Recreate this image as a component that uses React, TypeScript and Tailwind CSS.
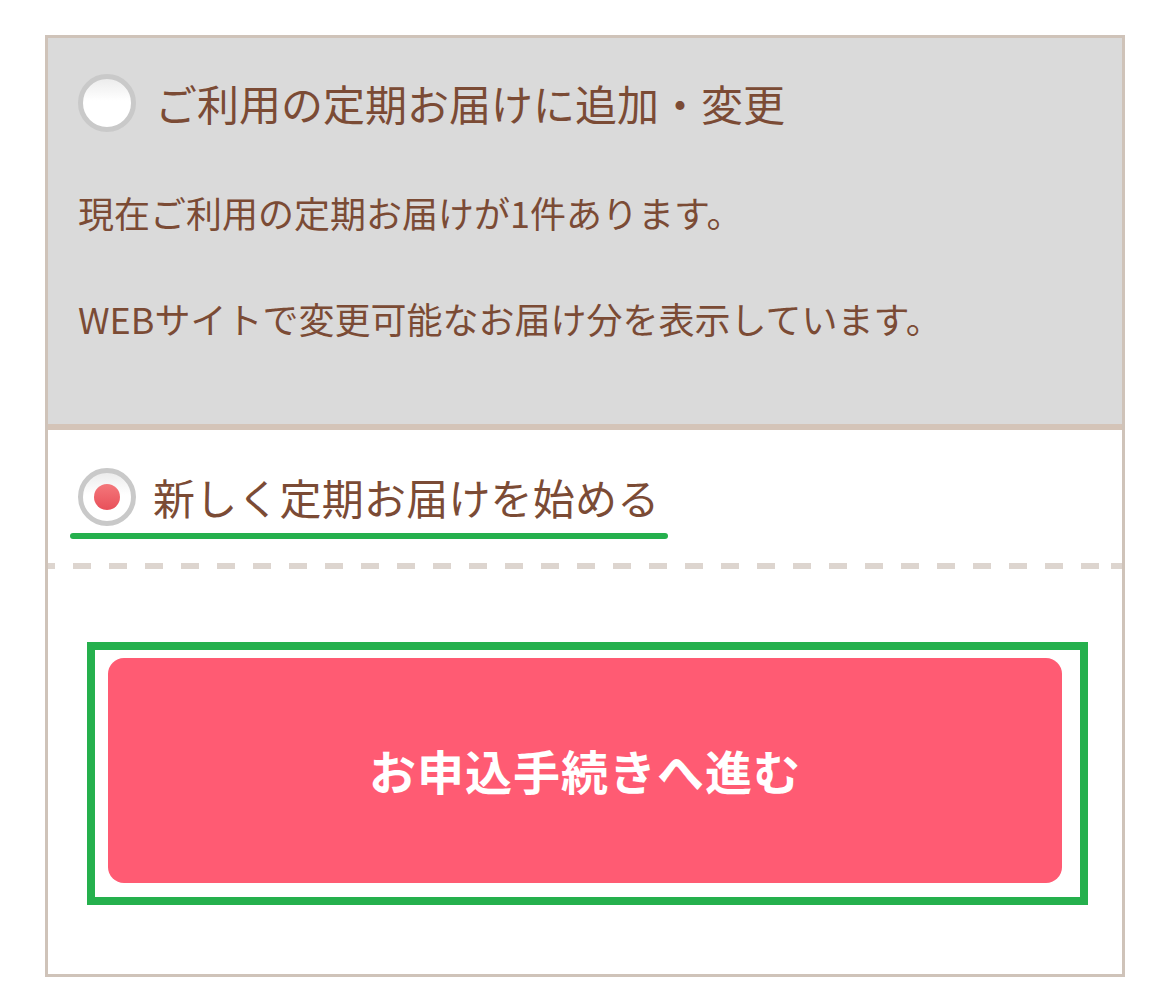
const FONT = "font-['Noto_Sans_CJK_JP','Noto_Sans',sans-serif]"

function Radio({ checked }: { checked: boolean }) {
  return (
    <span className="flex h-[58px] w-[58px] shrink-0 items-center justify-center rounded-full border-[5px] border-[#c9c9c9] bg-[linear-gradient(180deg,#ececec_0%,#ffffff_45%,#ffffff_100%)]">
      {checked && (
        <span className="h-[26px] w-[26px] rounded-full bg-[linear-gradient(180deg,#f4777b_0%,#e8505a_100%)]" />
      )}
    </span>
  )
}

export default function App() {
  return (
    <div className={`min-h-[1004px] bg-white pl-[45px] pt-[35px] text-[#7b4b35] ${FONT}`}>
      <div className="w-[1080px] border-[3px] border-[#cfc3b9]">
        {/* existing subscription */}
        <div className="flex flex-col border-b-[6px] border-[#d4c4b8] bg-[#dadada] pb-[79px] pl-[30px] pt-[36px]">
          <label className="flex items-center gap-[19px]">
            <Radio checked={false} />
            <span className="text-[42px] leading-[54px]">ご利用の定期お届けに追加・変更</span>
          </label>
          <p className="mt-[54px] text-[36px] leading-[53px]">現在ご利用の定期お届けが1件あります。</p>
          <p className="mt-[53px] text-[36px] leading-[53px]">WEBサイトで変更可能なお届け分を表示しています。</p>
        </div>

        {/* new subscription */}
        <div className="flex flex-col pt-[38px]">
          <label className="flex items-center gap-[17px] pl-[30px]">
            <Radio checked />
            <span className="text-[42px] leading-[58px] tracking-[0.2px]">新しく定期お届けを始める</span>
          </label>
          <div className="ml-[22px] mt-[7px] h-[6px] w-[598px] rounded-full bg-[#25b04d]" />
          <div className="mt-[24px] h-[6px] w-full bg-[repeating-linear-gradient(90deg,#ddd5cf_0px,#ddd5cf_18px,transparent_18px,transparent_36px)] bg-[position:-11px_0]" />

          <div className="mb-[69px] ml-[39px] mr-[34px] mt-[73px] border-[8px] border-[#25b04d] pb-[14px] pl-[13px] pr-[18px] pt-[8px]">
            <button className="flex h-[225px] w-full items-center justify-center rounded-[16px] bg-[#ff5b73] text-[47px] font-bold tracking-[1px] text-white">
              お申込手続きへ進む
            </button>
          </div>
        </div>
      </div>
    </div>
  )
}
